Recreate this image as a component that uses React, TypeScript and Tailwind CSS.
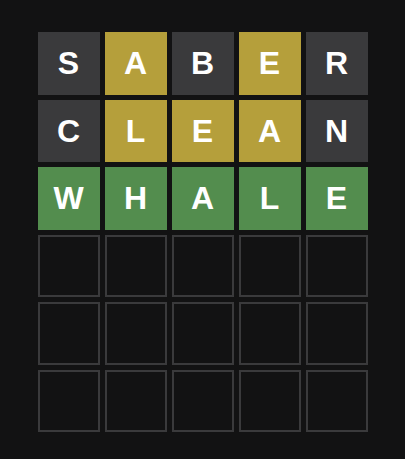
import React from "react";

type S = "absent" | "present" | "correct" | "empty";

const rows: { l: string; s: S }[][] = [
  [
    { l: "S", s: "absent" },
    { l: "A", s: "present" },
    { l: "B", s: "absent" },
    { l: "E", s: "present" },
    { l: "R", s: "absent" },
  ],
  [
    { l: "C", s: "absent" },
    { l: "L", s: "present" },
    { l: "E", s: "present" },
    { l: "A", s: "present" },
    { l: "N", s: "absent" },
  ],
  [
    { l: "W", s: "correct" },
    { l: "H", s: "correct" },
    { l: "A", s: "correct" },
    { l: "L", s: "correct" },
    { l: "E", s: "correct" },
  ],
];

const empty = Array.from({ length: 5 }, () => ({ l: "", s: "empty" as S }));
const all = [...rows, empty, empty, empty];

function Tile({ l, s }: { l: string; s: S }) {
  const cls =
    s === "absent"
      ? "bg-[#3a3a3c]"
      : s === "present"
      ? "bg-[#b59f3b]"
      : s === "correct"
      ? "bg-[#538d4e]"
      : "border-2 border-[#3a3a3c]";
  return (
    <div
      className={`flex items-center justify-center text-[32px] font-bold text-white leading-none ${cls}`}
      style={{ fontFamily: '"Liberation Sans", Arial, sans-serif' }}
    >
      {l}
    </div>
  );
}

export default function App() {
  return (
    <div className="w-[405px] h-[459px] bg-[#121213] flex justify-center pt-[32px]">
      <div className="grid grid-cols-5 grid-rows-6 gap-[5px] w-[330px] h-[400px]">
        {all.flatMap((r, i) =>
          r.map((t, j) => <Tile key={`${i}-${j}`} l={t.l} s={t.s} />)
        )}
      </div>
    </div>
  );
}
